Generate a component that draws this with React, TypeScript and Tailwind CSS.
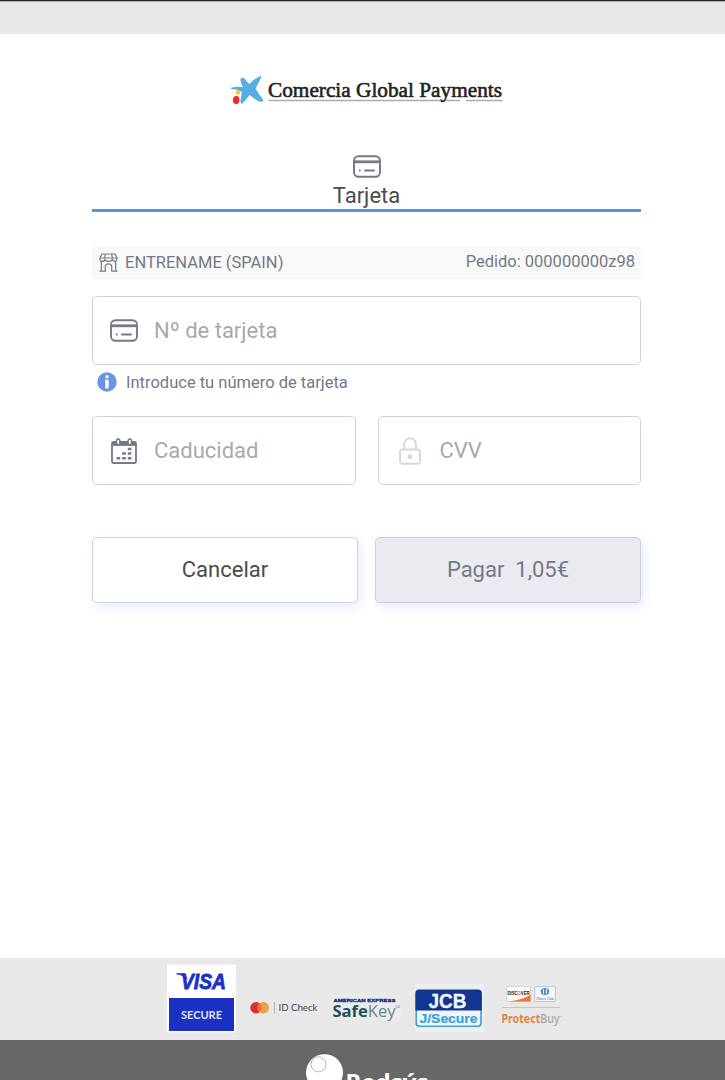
import { type ReactNode } from 'react';

interface IconProps {
  className?: string;
}

function CardIcon({ className }: IconProps) {
  return (
    <svg viewBox="0 0 28 23" className={className} fill="none" stroke="currentColor">
      <rect x="1" y="1.2" width="26" height="20.6" rx="4.5" strokeWidth="1.9" />
      <path d="M1.5 6.8h25" strokeWidth="2.8" />
      <path d="M12 15.5h9" strokeWidth="1.9" strokeLinecap="round" />
      <path d="M6.7 15.5h.1" strokeWidth="2" strokeLinecap="round" />
    </svg>
  );
}

function StoreIcon({ className }: IconProps) {
  return (
    <svg viewBox="0 0 19 19" className={className} fill="none" stroke="currentColor" strokeWidth="1.2" strokeLinejoin="round">
      <path d="M2.800 1h13.400l1.800 4H1zM6.400 1l-.8 4M12.600 1l.8 4" />
      <path d="M1 5v1.200q0 2.200 2.300 2.200t2.300-2.200q.4 2.200 3.900 2.200t3.900-2.200q.4 2.200 2.300 2.200t2.300-2.200V5" />
      <path d="M2.300 8.300v9.500M16.700 8.300v9.500M.5 18.200h5.800v-4.400a3.200 3 0 0 1 6.400 0v4.400h5.800" />
    </svg>
  );
}

function CalendarIcon({ className }: IconProps) {
  return (
    <svg viewBox="0 0 26 26" className={className} fill="none" stroke="currentColor">
      <rect x="1" y="4" width="24" height="21" rx="1.5" strokeWidth="1.8" />
      <path d="M1 6h24" strokeWidth="3.8" />
      <rect x="5.5" y="1" width="3.4" height="5.8" rx="1.7" fill="white" strokeWidth="1.5" />
      <rect x="17.1" y="1" width="3.4" height="5.8" rx="1.7" fill="white" strokeWidth="1.5" />
      <path d="M16.8 11h3.600M11.2 15.6h3.600M16.8 15.6h3.600M5.6 20.2h3.600M11.2 20.2h3.600M16.8 20.2h3.600" strokeWidth="2.5" />
    </svg>
  );
}

function LockIcon({ className }: IconProps) {
  return (
    <svg viewBox="0 0 22 28" className={className} fill="none" stroke="currentColor" strokeWidth="1.9">
      <path d="M5 12.5V7.2a6 6 0 0 1 12 0v5.3" />
      <rect x="1" y="12.5" width="20" height="14.3" rx="2.6" />
      <circle cx="11" cy="19.7" r="2.4" fill="currentColor" stroke="none" />
    </svg>
  );
}

function InfoIcon({ className }: IconProps) {
  return (
    <svg viewBox="0 0 20 20" className={className}>
      <circle cx="10" cy="10" r="9.7" fill="#6c92e6" />
      <circle cx="10" cy="4.8" r="1.7" fill="white" />
      <path d="M8 7.8h3.7v8.7H8.3V9.300H8z" fill="white" />
    </svg>
  );
}

function ComerciaLogo() {
  return (
    <svg width="278" height="36" viewBox="0 0 278 36" className="shrink-0">
      <path
        d="M2 13.7Q8 12 14 13.1Q11 7.5 11.5 5Q13.5 2.7 15.5 4.5Q18 8 20.5 9.9Q26 4 32.2 1.8Q33 3 26.6 14.5Q30 20.5 34.5 26.3Q33.5 28.5 30 27.5Q24 24 20.5 21Q17 26 13.5 29.5Q11.3 30.5 11.5 27Q12 21 13 18Q8 15.2 2 14.7z"
        fill="#55afe4"
      />
      <circle cx="9" cy="18.500" r="2.200" fill="#f5c52e" />
      <ellipse cx="7.200" cy="26" rx="3.300" ry="4" fill="#e92b25" transform="rotate(8 7 26)" />
      <path d="M39.500 26.500h191.500M237 26.500h36.500" stroke="#aaa" strokeWidth="1.700" />
      <text x="39" y="23" textLength="234" lengthAdjust="spacingAndGlyphs" fontFamily="Liberation Serif, serif" fontSize="22" fill="#222" stroke="#222" strokeWidth=".6">
        Comercia Global Payments
      </text>
    </svg>
  );
}

function VisaLogo() {
  return (
    <svg width="69" height="70" viewBox="0 0 69 70" className="mt-[6px] shrink-0">
      <path d="M0 .5h69v68H0z" fill="#fff" />
      <path d="M2 34h65v33H2z" fill="#1a31c3" />
      <text x="14" y="25" textLength="45" lengthAdjust="spacingAndGlyphs" fontFamily="Liberation Sans, sans-serif" fontSize="21.5" fontWeight="700" fontStyle="italic" fill="#1a31c3" stroke="#1a31c3" strokeWidth=".8">
        VISA
      </text>
      <path d="M9.500 9.200h8l3.500 6.500Q15 10.500 9.500 10.400z" fill="#1a31c3" />
      <text x="14" y="54.500" textLength="41" lengthAdjust="spacingAndGlyphs" fontFamily="Lato, sans-serif" fontSize="12" fontWeight="700" fill="#dfe4fb">
        SECURE
      </text>
    </svg>
  );
}

function MastercardLogo() {
  return (
    <svg width="70" height="16" viewBox="0 0 70 16" className="mt-[42px] ml-[14px] shrink-0">
      <circle cx="6" cy="7.8" r="5.7" fill="#dc3030" />
      <circle cx="13.2" cy="7.8" r="5.7" fill="#eda045" />
      <path d="M9.6 3.4a5.7 5.7 0 0 1 0 8.8a5.7 5.7 0 0 1 0-8.8z" fill="#ee6a30" />
      <path d="M24.500 2v11.500" stroke="#999" strokeWidth=".7" />
      <text x="28.500" y="11" textLength="39" lengthAdjust="spacingAndGlyphs" fontFamily="Lato, sans-serif" fontSize="9" fill="#454545">
        ID Check
      </text>
    </svg>
  );
}

function SafeKeyLogo() {
  return (
    <svg width="70" height="27" viewBox="0 0 70 27" className="mt-[36px] ml-[12px] shrink-0">
      <path d="M0 1h69v25H0z" fill="#ebebeb" />
      <text x="1.500" y="7.500" textLength="62" lengthAdjust="spacingAndGlyphs" fontFamily="Liberation Sans, sans-serif" fontSize="4.400" fontWeight="700" fill="#172b7b" stroke="#172b7b" strokeWidth=".3">
        AMERICAN EXPRESS
      </text>
      <text x=".5" y="22.500" textLength="63" lengthAdjust="spacingAndGlyphs" fontFamily="Open Sans, sans-serif" fontSize="16.500" fontWeight="700" fill="#274e58">
        Safe
        <tspan fontWeight="400" fill="#6c8589">Key</tspan>
      </text>
      <text x="63.500" y="14" fontFamily="Open Sans, sans-serif" fontSize="3" fill="#6c8589">
        SM
      </text>
    </svg>
  );
}

function JcbLogo() {
  return (
    <svg width="69" height="49" viewBox="0 0 69 49" className="mt-[26px] ml-[13px] shrink-0">
      <path d="M0 0h69v48H0z" fill="#eee" />
      <rect x="1.200" y="7.300" width="64.800" height="35" rx="3.200" fill="#f1f5f8" stroke="#36a1dc" strokeWidth="1.600" />
      <path d="M.4 26.500V9Q.4 5.500 4 5.500h59.300q3.500 0 3.500 3.500v17.500z" fill="#103690" />
      <text x="13.500" y="23.500" textLength="38" lengthAdjust="spacingAndGlyphs" fontFamily="Liberation Sans, sans-serif" fontSize="20.500" fontWeight="700" fill="#f5f7fb" stroke="#f5f7fb" strokeWidth=".3">
        JCB
      </text>
      <text x="4.500" y="38.500" textLength="58" lengthAdjust="spacingAndGlyphs" fontFamily="Liberation Sans, sans-serif" fontSize="13.500" fontWeight="700" fill="#36a1dc" stroke="#36a1dc" strokeWidth=".2">
        J/Secure
      </text>
    </svg>
  );
}

function ProtectBuyLogo() {
  return (
    <svg width="63" height="44" viewBox="0 0 63 44" className="mt-[27px] ml-[17px] shrink-0">
      <path d="M5.500 1.500h24v15h-24z" fill="#fafafa" stroke="#bbb" strokeWidth=".5" />
      <path d="M8 16.500Q23 14.500 29.500 9.500v7z" fill="#e87934" />
      <text x="6.500" y="9.500" textLength="22" lengthAdjust="spacingAndGlyphs" fontFamily="Liberation Sans, sans-serif" fontSize="5" fontWeight="700" fill="#222">
        DISC<tspan fill="#e87934">O</tspan>VER
      </text>
      <rect x="33.800" y="1.500" width="20.500" height="15" rx="1" fill="#f5f8fb" stroke="#8ab0d8" strokeWidth=".6" />
      <ellipse cx="44" cy="6.500" rx="4.300" ry="3.600" fill="#5790cf" />
      <path d="M42.500 4.300v4.400M45.500 4.300v4.400" stroke="white" strokeWidth=".9" />
      <text x="35.500" y="14.500" textLength="17" lengthAdjust="spacingAndGlyphs" fontFamily="Liberation Serif, serif" fontSize="4.500" fill="#4b5870">
        Diners Club
      </text>
      <path d="M1 22.500h58" stroke="#bbb" strokeWidth=".8" />
      <text x=".5" y="38" textLength="58" lengthAdjust="spacingAndGlyphs" fontFamily="Noto Sans, sans-serif" fontSize="12.500" fontWeight="700" fill="#e58440">
        Protect
        <tspan fontWeight="500" fill="#a5a5a5">Buy</tspan>
      </text>
      <circle cx="60" cy="31.500" r=".6" fill="#aaa" />
    </svg>
  );
}

function RedsysLogo() {
  return (
    <svg width="126" height="40" viewBox="0 0 126 40" className="ml-[305px] shrink-0">
      <circle cx="19.500" cy="32.700" r="18.500" fill="#fff" />
      <circle cx="13.500" cy="24.300" r="7.500" fill="#fff" stroke="#999" strokeWidth=".7" />
      <text x="40.500" y="50.500" textLength="83" lengthAdjust="spacingAndGlyphs" fontFamily="Noto Sans, sans-serif" fontSize="24" fontWeight="700" fill="#fff">
        Redsýs
      </text>
    </svg>
  );
}

function Field({ icon, label, className = '' }: { icon: ReactNode; label: string; className?: string }) {
  return (
    <label className={`flex items-center rounded-[5px] border border-[#cfd1da] bg-white ${className}`}>
      <span className="ml-[17px] flex w-7 shrink-0 justify-center">{icon}</span>
      <input
        placeholder={label}
        className="ml-4 w-full min-w-0 bg-transparent text-[22px] text-[#6f7580] outline-none placeholder:text-[#a9a9a9] placeholder:opacity-100"
      />
    </label>
  );
}

export default function App() {
  return (
    <div className="flex h-[1080px] w-[725px] flex-col overflow-hidden bg-white font-['Roboto',sans-serif] text-[#747985]">
      <header className="h-[34px] shrink-0 border-t border-[#25272b] bg-[#e8e8e8] shadow-[inset_0_1px_0_#aaabaf]" />

      <main className="flex flex-1 flex-col pr-[84px] pl-[92px]">
        <div className="mt-10 flex justify-center pl-[3px]">
          <ComerciaLogo />
        </div>

        {/* Payment method */}
        <button className="mt-[45px] flex h-[57px] shrink-0 flex-col items-center border-b-[3px] border-[#5596dc]">
          <CardIcon className="h-[23px] w-7 shrink-0" />
          <span className="mt-[5px] text-[22px] leading-[26px] text-[#4b4b4b]">Tarjeta</span>
        </button>

        <div className="mt-[34px] flex h-[33px] shrink-0 items-center justify-between bg-[#f8faf9] pr-[6px] pl-[7px]">
          <div className="flex items-center gap-[7px]">
            <StoreIcon className="h-[19px] w-[19px]" />
            <span className="pt-px text-[16.5px]">ENTRENAME (SPAIN)</span>
          </div>
          <span className="-mt-px text-[16.5px]">Pedido: 000000000z98</span>
        </div>

        <Field icon={<CardIcon className="h-[23px] w-7" />} label="Nº de tarjeta" className="mt-[17px] h-[69px]" />
        <p className="mt-[7px] flex h-5 items-center gap-[9px] pl-[5px] text-[16.5px]">
          <InfoIcon className="h-5 w-5" />
          <span className="pt-[3px]">Introduce tu número de tarjeta</span>
        </p>

        <div className="mt-6 grid grid-cols-2 gap-[22px]">
          <Field icon={<CalendarIcon className="h-[26px] w-[26px]" />} label="Caducidad" className="h-[69px]" />
          <Field icon={<LockIcon className="h-7 w-[22px] text-[#d5d8df]" />} label="CVV" className="h-[69px]" />
        </div>

        <div className="mt-[52px] grid grid-cols-2 gap-[17px] text-[22px]">
          <button className="h-[66px] rounded-[5px] border border-[#cfd4dd] bg-white pb-[2px] text-[#4b4b4b] shadow-[3px_4px_12px_#e6ebfc]">
            Cancelar
          </button>
          <button className="h-[66px] rounded-[5px] border border-[#cdd0d9] bg-[#eaebf0] pb-[2px] whitespace-pre shadow-[3px_4px_12px_#e6ebfc]">
            {'Pagar  1,05€'}
          </button>
        </div>
      </main>

      <footer className="shrink-0">
        <div className="flex h-[82px] items-start bg-[#e8e8e8] pl-[167px]">
          <VisaLogo />
          <MastercardLogo />
          <SafeKeyLogo />
          <JcbLogo />
          <ProtectBuyLogo />
        </div>
        <div className="h-10 bg-[#676767]">
          <RedsysLogo />
        </div>
      </footer>
    </div>
  );
}
